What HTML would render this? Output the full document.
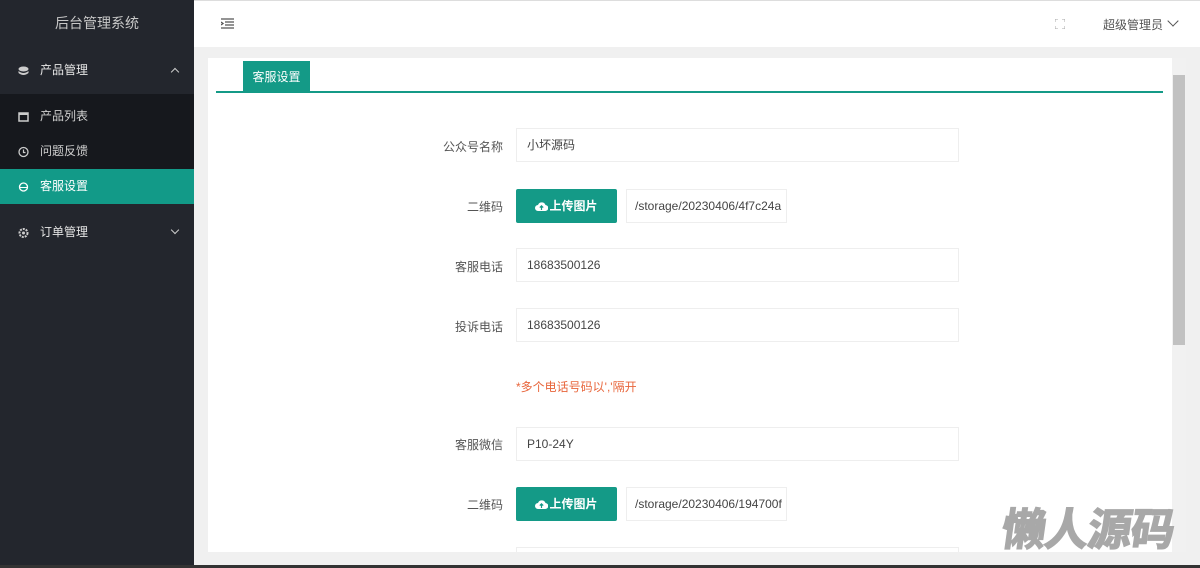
<!DOCTYPE html>
<html style="width:1200px;height:568px;overflow:hidden"><head><meta charset="utf-8"><style>
*{margin:0;padding:0;box-sizing:border-box}
body{width:1200px;height:568px;overflow:hidden;font-family:"Liberation Sans","Noto Sans CJK SC",sans-serif;background:#f0f0f0;position:relative;font-size:12px;color:#444}
.side{position:absolute;left:0;top:0;width:194px;height:568px;background:#23262d}
.title{height:47px;line-height:46px;text-align:center;color:#c8c8c8;font-size:14px}
.m{height:47px;line-height:47px;color:#e6e6e6;padding-left:40px;position:relative;font-size:12px}
.sub{background:#16181d;padding:5px 0 0}
.s{height:35px;line-height:35px;color:#cfcfcf;padding-left:40px;position:relative}
.s.act{background:#129a88;color:#fff}
.ic{position:absolute;left:18px;top:50%;transform:translateY(-50%);width:11px;height:10px}
.arr{position:absolute;right:16px;top:50%;width:6px;height:6px;border-left:1.5px solid #ccc;border-top:1.5px solid #ccc}
.head{position:absolute;left:194px;top:0;right:0;height:47px;background:#fff;border-top:1px solid #ddd}
.card{position:absolute;left:208px;top:58px;width:964px;height:494px;background:#fff;overflow:hidden}
.tab{position:absolute;left:35px;top:3px;width:67px;height:31px;background:#149a87;color:#fff;line-height:32px;text-align:center}
.line{position:absolute;left:8px;top:33px;width:947px;height:2px;background:#149a87}
.lab{position:absolute;width:120px;text-align:right;left:175px;color:#555}
.inp{position:absolute;left:308px;width:443px;height:34px;border:1px solid #eee;line-height:32px;padding-left:10px;color:#444}
.btn{position:absolute;left:308px;width:101px;height:34px;background:#149a87;color:#fff;line-height:34px;text-align:center;border-radius:2px;font-weight:bold}
.btn svg{vertical-align:-2px;margin-right:1px}
.path{position:absolute;left:418px;width:161px;height:34px;border:1px solid #eee;line-height:32px;padding-left:8px;overflow:hidden;white-space:nowrap;color:#444}
.sb{position:absolute;left:1172px;top:58px;width:14px;height:494px;background:#f1f1f1}
</style></head><body>
<div class="side">
<div class="title">后台管理系统</div>
<div class="m"><svg class="ic" viewBox="0 0 11 10"><ellipse cx="5.5" cy="3" rx="5" ry="2.5" fill="#ccc"/><path d="M.5 5q5 4 10 0v2q-5 4-10 0z" fill="#ccc"/></svg>产品管理<span class="arr" style="transform:rotate(45deg);top:22px"></span></div>
<div class="sub">
<div class="s"><svg class="ic" viewBox="0 0 11 10"><rect x="1" y="1" width="9" height="8" fill="none" stroke="#ccc" stroke-width="1.5"/><rect x="1" y="1" width="9" height="2" fill="#ccc"/></svg>产品列表</div>
<div class="s"><svg class="ic" viewBox="0 0 11 11" style="height:11px"><circle cx="5.5" cy="5.5" r="4.5" fill="none" stroke="#ccc" stroke-width="1.3"/><path d="M5.5 3v3h2" stroke="#ccc" fill="none" stroke-width="1.2"/></svg>问题反馈</div>
<div class="s act"><svg class="ic" viewBox="0 0 11 11" style="height:11px"><circle cx="5.5" cy="5.5" r="4" fill="none" stroke="#fff" stroke-width="1.3"/><path d="M2 6h7" stroke="#fff"/></svg>客服设置</div>
</div>
<div class="m" style="margin-top:5px"><svg class="ic" viewBox="0 0 11 11" style="height:11px"><circle cx="5.5" cy="5.5" r="4" fill="none" stroke="#ccc" stroke-width="2" stroke-dasharray="2 1"/><circle cx="5.5" cy="5.5" r="1.5" fill="#ccc"/></svg>订单管理<span class="arr" style="transform:rotate(225deg);top:18px"></span></div>
</div>
<div class="head">
<svg style="position:absolute;left:27px;top:17px" width="13" height="12" viewBox="0 0 13 12"><path d="M0 1h13M4 4h9M4 7h9M0 10h13M0 4l2 1.5L0 7" stroke="#555" stroke-width="1.3" fill="none"/></svg>
<svg style="position:absolute;left:861px;top:18px" width="10" height="10" viewBox="0 0 10 10"><path d="M0 3V0h3M7 0h3v3M10 7v3H7M3 10H0V7" stroke="#aaa" fill="none"/></svg>
<div style="position:absolute;left:909px;top:15px;color:#555">超级管理员</div>
<span style="position:absolute;left:975px;top:16px;width:8px;height:8px;border-right:1.3px solid #555;border-bottom:1.3px solid #555;transform:rotate(45deg)"></span>
</div>
<div class="card">
<div class="tab">客服设置</div><div class="line"></div>
<div class="lab" style="top:80px">公众号名称</div><div class="inp" style="top:70px">小坏源码</div>
<div class="lab" style="top:140px">二维码</div><div class="btn" style="top:131px"><svg width="13" height="11" viewBox="0 0 13 11"><path d="M3 10a3 3 0 0 1 0-6 4 4 0 0 1 7.5 0A3 3 0 0 1 10 10z" fill="#fff"/><path d="M6.5 9V5M4.8 6.6l1.7-1.7 1.7 1.7" stroke="#149a87" fill="none" stroke-width="1.2"/></svg>上传图片</div><div class="path" style="top:131px">/storage/20230406/4f7c24a</div>
<div class="lab" style="top:200px">客服电话</div><div class="inp" style="top:190px">18683500126</div>
<div class="lab" style="top:260px">投诉电话</div><div class="inp" style="top:250px">18683500126</div>
<div style="position:absolute;left:308px;top:320px;color:#e8663c">*多个电话号码以','隔开</div>
<div class="lab" style="top:378px">客服微信</div><div class="inp" style="top:369px">P10-24Y</div>
<div class="lab" style="top:438px">二维码</div><div class="btn" style="top:429px"><svg width="13" height="11" viewBox="0 0 13 11"><path d="M3 10a3 3 0 0 1 0-6 4 4 0 0 1 7.5 0A3 3 0 0 1 10 10z" fill="#fff"/><path d="M6.5 9V5M4.8 6.6l1.7-1.7 1.7 1.7" stroke="#149a87" fill="none" stroke-width="1.2"/></svg>上传图片</div><div class="path" style="top:429px">/storage/20230406/194700f</div>
<div class="inp" style="top:489px"></div>
</div>
<div class="sb"><div style="position:absolute;left:1px;top:17px;width:12px;height:270px;background:#c1c1c1"></div></div>
<div style="position:absolute;left:1002px;top:506px;font-size:44px;line-height:50px;font-weight:bold;color:#a8a8a8;letter-spacing:-1px;transform:skewX(-8deg);-webkit-text-stroke:1.5px #a8a8a8">懒人源码</div>
<div style="position:absolute;left:0;top:565px;width:1200px;height:3px;background:#333"></div>
</body></html>
